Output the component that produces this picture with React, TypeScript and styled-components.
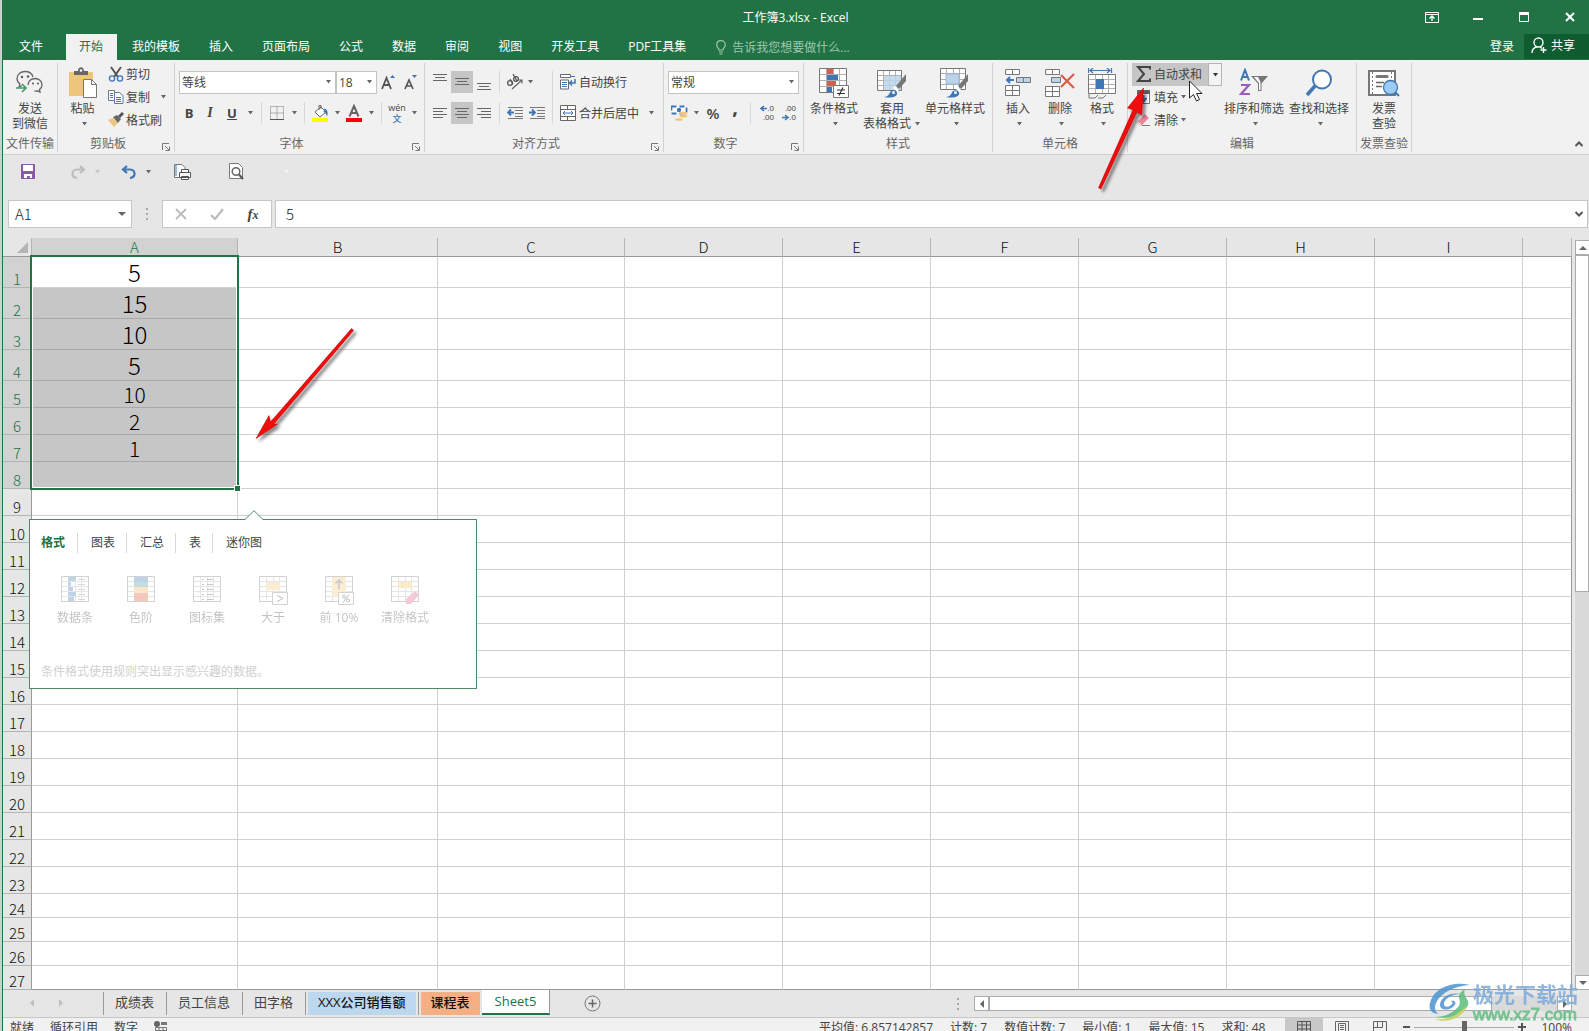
import React from "react";
import styled, { createGlobalStyle, css } from "styled-components";

const GREEN = "#217346";
const INK = "#444444";
const BLUE = "#3f76b5";

const GlobalStyle = createGlobalStyle`
  *, *::before, *::after { box-sizing: border-box; }
  html, body { margin: 0; padding: 0; overflow: hidden; }
  body, button, input, select {
    font-family: "Open Sans", "Noto Sans CJK SC", sans-serif;
    font-size: 12px;
    color: ${INK};
  }
  button { background: none; border: 0; padding: 0; margin: 0; cursor: default; }
  input, select { margin: 0; border: 0; outline: 0; border-radius: 0; }
`;

const Window = styled.div`
  position: relative;
  display: flex;
  flex-direction: column;
  min-height: 100vh;
  padding-left: 3px;
  background: linear-gradient(to right, #c9d2cd 2px, ${GREEN} 2px, ${GREEN} 3px, #e6e6e6 3px);
`;

/* ---------- title bar and tabs ---------- */
const TitleBar = styled.header`
  display: grid;
  grid-template-columns: 1fr auto 1fr;
  align-items: center;
  height: 34px;
  margin-left: -1px;
  background: ${GREEN};
  color: #fff;
`;
const Title = styled.h1`
  grid-column: 2;
  margin: 0;
  font-size: 12px;
  font-weight: 400;
`;
const WindowButtons = styled.div`
  display: flex;
  justify-content: flex-end;
`;
const WindowButton = styled.button`
  display: grid;
  place-items: center;
  width: 46px;
  height: 34px;
  &:last-child { width: 42px; padding-left: 4px; }
`;
const TabBar = styled.nav`
  display: flex;
  align-items: stretch;
  height: 26px;
  margin-left: -1px;
  padding-left: 3px;
  background: ${GREEN};
`;
const RibbonTab = styled.button<{ $active?: boolean }>`
  padding: 0 14px 0 ${(p) => (p.$active ? 13 : 14)}px;
  margin-right: 1px;
  line-height: 22px;
  color: ${(p) => (p.$active ? GREEN : "#fff")};
  background: ${(p) => (p.$active ? "#f1f1f1" : "transparent")};
`;
const TellMe = styled.label`
  display: flex;
  flex: 1;
  align-items: center;
  gap: 6px;
  padding-left: 15px;
`;
const TellMeInput = styled.input`
  width: 160px;
  padding: 0;
  background: transparent;
  &::placeholder { color: #9cc7ad; opacity: 1; }
`;
const SignIn = styled.button`
  padding: 0 10px;
  line-height: 22px;
  color: #fff;
`;
const Share = styled.button`
  display: flex;
  align-items: center;
  gap: 4px;
  width: 65px;
  height: 25px;
  padding: 0 0 2px 7px;
  line-height: 20px;
  color: #fff;
  background: #0f5c30;
`;

/* ---------- ribbon ---------- */
const Ribbon = styled.section`
  display: flex;
  padding: 3px 0 2px;
  background: #f1f1f1;
  border-bottom: 1px solid #d0d0d0;
`;
const GroupBox = styled.div<{ $w: number }>`
  display: flex;
  flex-direction: column;
  flex: none;
  width: ${(p) => p.$w}px;
  border-right: 1px solid #d2d2d2;
`;
const GroupBody = styled.div<{ $pad?: number }>`
  display: flex;
  height: 72px;
  padding-left: ${(p) => p.$pad ?? 4}px;
`;
const GroupFoot = styled.div`
  display: flex;
  height: 17px;
  line-height: 17px;
  color: #666;
  text-align: center;
  white-space: nowrap;
`;
const GroupName = styled.span`
  flex: 1;
`;
const Launcher = styled.button`
  display: grid;
  place-items: end center;
  width: 16px;
  height: 16px;
`;
const RibbonEnd = styled.div`
  display: flex;
  flex: 1;
  align-items: flex-end;
  justify-content: flex-end;
  padding: 0 5px 0 0;
`;
const BigButton = styled.button<{ $w: number }>`
  display: flex;
  flex-direction: column;
  align-items: center;
  flex: none;
  width: ${(p) => p.$w}px;
  height: 72px;
  padding-top: 4px;
  white-space: nowrap;
`;
const BigLine = styled.span<{ $lone?: boolean }>`
  display: flex;
  align-items: center;
  gap: 3px;
  height: 15px;
  padding-left: ${(p) => (p.$lone ? 3 : 0)}px;
  line-height: 15px;
`;
const BigIcon = styled.span`
  display: grid;
  place-items: center;
  height: 32px;
  margin-bottom: 2px;
`;
const Stack = styled.div`
  display: flex;
  flex-direction: column;
`;
const SmallButton = styled.button<{ $hot?: boolean }>`
  display: flex;
  align-items: center;
  gap: 2px;
  height: 23px;
  padding: 0 ${(p) => (p.$hot ? 6 : 4)}px 2px 4px;
  white-space: nowrap;
  background: ${(p) => (p.$hot ? "#c6c6c6" : "transparent")};
`;
const SmallCaret = styled.span<{ $gap: number }>`
  display: flex;
  padding-left: ${(p) => p.$gap}px;
`;
const SplitRow = styled.div`
  display: flex;
  width: 90px;
`;
const SplitDrop = styled.button`
  display: grid;
  place-items: center;
  width: 14px;
  height: 23px;
  background: #f4f4f4;
  border: 1px solid #b5b5b5;
`;
const Rows = styled.div`
  display: flex;
  flex-direction: column;
  gap: 9px;
  padding-top: 8px;
`;
const Row = styled.div`
  display: flex;
  align-items: center;
  height: 22px;
`;
const Tool = styled.button<{ $w?: number; $on?: boolean }>`
  display: grid;
  place-items: center;
  flex: none;
  width: ${(p) => p.$w ?? 22}px;
  height: 22px;
  background: ${(p) => (p.$on ? "#c6c6c6" : "transparent")};
`;
const ToolText = styled.span<{ $kind: "b" | "i" | "u" | "pct" | "comma" }>`
  font-size: 13px;
  line-height: 18px;
  font-weight: 700;
  ${(p) => p.$kind === "i" && css`font-family: "Liberation Serif", serif; font-style: italic; font-size: 14px;`}
  ${(p) => p.$kind === "u" && css`text-decoration: underline;`}
  ${(p) => p.$kind === "pct" && css`font-size: 15px; font-weight: 600;`}
  ${(p) => p.$kind === "comma" && css`font-size: 20px; line-height: 8px; padding-bottom: 13px;`}
`;
const Divider = styled.span<{ $tall?: boolean }>`
  flex: none;
  width: 1px;
  height: ${(p) => (p.$tall ? "53px" : "22px")};
  margin: ${(p) => (p.$tall ? "8px 4px 0" : "0 4px")};
  background: #d8d8d8;
`;
const Combo = styled.label<{ $w: number }>`
  display: flex;
  align-items: center;
  width: ${(p) => p.$w}px;
  height: 23px;
  padding: 0 3px 0 2px;
  background: #fff;
  border: 1px solid #c3c3c3;
`;
const Select = styled.select`
  flex: 1;
  min-width: 0;
  padding: 0;
  appearance: none;
  background: transparent;
`;
const WideTool = styled.button`
  display: flex;
  align-items: center;
  gap: 3px;
  height: 22px;
  padding: 0 3px;
  white-space: nowrap;
`;

/* ---------- quick access and formula bar ---------- */
const QuickBar = styled.div`
  display: flex;
  align-items: center;
  height: 45px;
  padding: 0 0 12px 12px;
`;
const QuickButton = styled.button<{ $w: number }>`
  display: grid;
  place-items: center;
  width: ${(p) => p.$w}px;
  height: 24px;
`;
const Spacer = styled.span<{ $w: number }>`
  flex: none;
  width: ${(p) => p.$w}px;
`;
const FormulaBar = styled.div`
  display: flex;
  align-items: center;
  height: 28px;
  margin: 0 1px 10px 5px;
`;
const Field = styled.div<{ $w?: number }>`
  display: flex;
  align-items: center;
  flex: ${(p) => (p.$w ? "none" : 1)};
  width: ${(p) => (p.$w ? `${p.$w}px` : "auto")};
  height: 28px;
  background: #fff;
  border: 1px solid #c6c6c6;
`;
const FieldInput = styled.input<{ $pad: number }>`
  flex: 1;
  min-width: 0;
  height: 26px;
  padding: 0 0 2px ${(p) => p.$pad}px;
  font-family: "Noto Sans CJK SC", sans-serif;
  font-size: 15px;
  font-weight: 300;
  color: #222;
  background: transparent;
`;
const FieldButton = styled.button<{ $w: number }>`
  display: grid;
  place-items: center;
  width: ${(p) => p.$w}px;
  height: 26px;
`;
const Grip = styled.span<{ $w: number }>`
  display: grid;
  place-items: center;
  flex: none;
  width: ${(p) => p.$w}px;
`;
const Fx = styled.span`
  font-family: "Liberation Serif", serif;
  font-size: 15px;
  font-style: italic;
  font-weight: 700;
  line-height: 18px;
  & > small { font-size: 12px; }
`;

/* ---------- sheet ---------- */
const SheetArea = styled.main`
  position: relative;
  display: flex;
`;
const Table = styled.table`
  flex: 1;
  width: 0;
  table-layout: fixed;
  border-collapse: separate;
  border-spacing: 0;
  font-family: "Noto Sans CJK SC", sans-serif;
  font-weight: 300;
  color: #000;
`;
const ColHead = styled.th<{ $sel?: boolean }>`
  height: 19px;
  padding: 0;
  font-size: 15px;
  font-weight: 300;
  line-height: 18px;
  color: ${(p) => (p.$sel ? GREEN : "#111")};
  background: ${(p) => (p.$sel ? "#d2d2d2" : "#e6e6e6")};
  border-right: 1px solid #b4b4b4;
  border-bottom: 1px solid #999;
`;
const Corner = styled.td`
  padding: 0 3px 3px 0;
  text-align: right;
  vertical-align: bottom;
  line-height: 0;
  background: #e6e6e6;
  border-right: 1px solid #b4b4b4;
  border-bottom: 1px solid #999;
`;
const RowHead = styled.th<{ $sel?: boolean; $h: number }>`
  height: ${(p) => p.$h}px;
  padding: 0;
  font-size: 15px;
  font-weight: 300;
  line-height: 16px;
  vertical-align: bottom;
  color: ${(p) => (p.$sel ? GREEN : "#111")};
  background: ${(p) => (p.$sel ? "#d2d2d2" : "#e6e6e6")};
  border-right: 1px solid #999;
  border-bottom: 1px solid #b4b4b4;
`;
const Cell = styled.td<{ $fill?: boolean; $size?: number }>`
  padding: 0;
  font-size: ${(p) => p.$size ?? 20}px;
  line-height: 24px;
  text-align: center;
  background: ${(p) => (p.$fill ? "#c6c6c6" : "#fff")};
  border-right: 1px solid #d0d0d0;
  border-bottom: 1px solid ${(p) => (p.$fill ? "#a8a8a8" : "#d0d0d0")};
  &:last-child { border-right-color: #999; }
  tr:last-child > & { border-bottom-color: #999; }
`;
const Selection = styled.div`
  position: absolute;
  left: 27px;
  top: 17px;
  width: 209px;
  height: 235px;
  border: 2px solid ${GREEN};
  box-shadow: inset 0 0 0 1px #fff;
  pointer-events: none;
  &::after {
    content: "";
    position: absolute;
    right: -4px;
    bottom: -4px;
    width: 7px;
    height: 7px;
    background: ${GREEN};
    border: 1px solid #fff;
  }
`;
const VScroll = styled.div`
  display: flex;
  flex-direction: column;
  flex: none;
  width: 17px;
  padding: 2px 0 0 3px;
`;
const ScrollButton = styled.button`
  display: grid;
  place-items: center;
  flex: none;
  width: 15px;
  height: 15px;
  background: #fff;
  border: 1px solid #ababab;
`;
const ScrollThumb = styled.span<{ $grow: number }>`
  flex: ${(p) => p.$grow};
  background: #fff;
  border: 1px solid #ababab;
`;
const ScrollTrack = styled.span<{ $grow: number }>`
  flex: ${(p) => p.$grow};
  background: #dadada;
`;

/* ---------- quick analysis popup ---------- */
const Popup = styled.aside`
  position: absolute;
  left: 26px;
  top: 281px;
  width: 448px;
  height: 170px;
  padding: 13px 11px 0;
  background: #fff;
  border: 1px solid #4d8a69;
`;
const PopupTip = styled.svg`
  position: absolute;
  left: 214px;
  top: -10px;
`;
const PopupTabs = styled.div`
  display: flex;
`;
const PopupTab = styled.button<{ $on?: boolean }>`
  padding: 0 11px 0 13px;
  line-height: 20px;
  border-right: 1px solid #d8d8d8;
  color: ${(p) => (p.$on ? GREEN : INK)};
  font-weight: ${(p) => (p.$on ? 700 : 400)};
  &:first-child { padding: 0 12px 0 0; }
  &:last-child { border: 0; }
`;
const PopupItems = styled.div`
  display: flex;
  margin: 22px 0 0 1px;
  opacity: 0.32;
`;
const PopupItem = styled.button`
  display: flex;
  flex-direction: column;
  align-items: center;
  gap: 4px;
  width: 66px;
  line-height: 18px;
  white-space: nowrap;
`;
const PopupHint = styled.p`
  margin: 35px 0 0;
  line-height: 20px;
  color: #d0d0d0;
`;

/* ---------- sheet tabs and status ---------- */
const SheetBar = styled.footer`
  display: flex;
  height: 28px;
  padding-right: 17px;
  border-bottom: 1px solid #c6c6c6;
`;
const SheetTabs = styled.div`
  display: flex;
  flex: 1;
  align-items: flex-start;
`;
const SheetNav = styled.button`
  display: grid;
  place-items: center;
  width: 29px;
  height: 26px;
`;
const SheetTab = styled.button<{ $tone?: string; $on?: boolean }>`
  flex: none;
  height: 23px;
  margin-top: 2px;
  padding: 0 12px 4px 11px;
  font-size: 13px;
  line-height: 18px;
  white-space: nowrap;
  border-left: 1px solid #999;
  ${(p) =>
    p.$tone &&
    css`
      color: #111;
      padding: 0 10px 4px;
      background: ${p.$tone};
      border-left: 2px solid #e6e6e6;
      border-right: 2px solid #e6e6e6;
      box-shadow: -1px 0 0 #999;
      margin-left: 1px;
      font-weight: 500;
    `}
  ${(p) =>
    p.$on &&
    css`
      height: 25px;
      margin-top: 0;
      padding: 0 13px 2px;
      line-height: 20px;
      color: ${GREEN};
      background: #fff;
      border-left: 0;
      border-right: 1px solid #999;
      border-bottom: 2px solid ${GREEN};
    `}
`;
const AddSheet = styled.button`
  display: grid;
  place-items: center;
  width: 18px;
  height: 26px;
  margin-left: 33px;
`;
const HScroll = styled.div`
  display: flex;
  flex: 0 1 598px;
  height: 15px;
  margin-top: 6px;
`;
const StatusBar = styled.div`
  display: flex;
  align-items: center;
  height: 22px;
  padding: 0 17px 4px 7px;
  white-space: nowrap;
  background: #f1f1f1;
`;
const StatusGroup = styled.div<{ $gap: number; $grow?: boolean }>`
  display: flex;
  align-items: center;
  flex: ${(p) => (p.$grow ? 1 : "none")};
  gap: ${(p) => p.$gap}px;
`;
const ViewButton = styled.button<{ $on?: boolean }>`
  display: grid;
  place-items: center;
  width: 38px;
  height: 18px;
  background: ${(p) => (p.$on ? "#c8c8c8" : "transparent")};
`;
const ZoomSlider = styled.input`
  width: 100px;
  height: 14px;
  appearance: none;
  background: linear-gradient(#aaa, #aaa) center / 100% 1px no-repeat;
  &::-webkit-slider-thumb {
    appearance: none;
    width: 5px;
    height: 12px;
    background: #666;
  }
`;

/* ---------- overlays ---------- */
const Notes = styled.svg`
  position: absolute;
  left: 0;
  top: 0;
  pointer-events: none;
`;
const Watermark = styled.div`
  position: absolute;
  right: 11px;
  bottom: 16px;
  display: flex;
  align-items: center;
  gap: 2px;
  opacity: 0.85;
  pointer-events: none;
`;
const MarkName = styled.div`
  font-family: "Noto Sans CJK SC", sans-serif;
  font-size: 21px;
  font-weight: 700;
  line-height: 23px;
  color: #7eabd8;
`;
const MarkUrl = styled.div`
  font-family: "Liberation Sans", sans-serif;
  font-size: 17px;
  font-weight: 400;
  line-height: 19px;
  color: #3fae68;
  -webkit-text-stroke: 1px #6cc08b;
`;

/* ---------- icons ---------- */
type IcoProps = { w: number; h?: number; children: React.ReactNode };
const Ico = ({ w, h = w, children }: IcoProps) => (
  <svg width={w} height={h} viewBox={`0 0 ${w} ${h}`} fill="none" aria-hidden="true">
    {children}
  </svg>
);
const Caret = ({ c = "#666" }: { c?: string }) => (
  <Ico w={7} h={4}><path d="M1 0h5L3.500 3.500z" fill={c} /></Ico>
);
const Tri = ({ d, c = "#666" }: { d: "up" | "down" | "left" | "right"; c?: string }) => {
  const path = { up: "M0 6l4-4 4 4z", down: "M0 2l4 4 4-4z", left: "M6 0L2 4l4 4z", right: "M2 0l4 4-4 4z" }[d];
  return <Ico w={8}><path d={path} fill={c} /></Ico>;
};
const Chevron = ({ up }: { up?: boolean }) => (
  <Ico w={10} h={8}><path d={up ? "M1.500 6L5 2.500 8.500 6" : "M1.500 2L5 5.500 8.500 2"} stroke="#555" strokeWidth="2" /></Ico>
);
const LauncherIcon = () => (
  <Ico w={8}>
    <path d="M.5 7V.5H7" stroke="#777" /><path d="M3 3l4 4M7.500 3.500v4h-4" stroke="#777" />
  </Ico>
);
const Dots = () => (
  <Ico w={3} h={12}><path d="M0 0h2v2H0zM0 5h2v2H0zM0 10h2v2H0z" fill="#a8a8a8" /></Ico>
);

const WeChat = () => (
  <Ico w={28} h={26}>
    <path d="M17 7C16 3.500 12.500 1.500 9 1.500 4.500 1.500 1 4.500 1 8.500c0 2.200 1 4 2.800 5.300L3 17l3-1.500" stroke="#666" strokeWidth="1.300" />
    <path d="M12 15c0-4 3.200-6.500 7-6.500s7 2.700 7 6.200c0 2-1 3.700-2.500 4.800l.5 2.500-2.500-1.200c-1 .3-2 .4-3 .2" stroke="#666" strokeWidth="1.300" />
    <circle cx="6" cy="7" r="1.200" fill="#555" /><circle cx="12" cy="6.500" r="1.200" fill="#555" />
    <circle cx="17" cy="13.500" r="1" fill="#555" /><circle cx="22" cy="13.500" r="1" fill="#555" />
    <path d="M0 18h9M6 14l4 4-4 4" stroke="#3f9a63" strokeWidth="1.600" />
  </Ico>
);
const Paste = () => (
  <Ico w={29} h={32}>
    <path d="M1 5h24v8H16v16H1z" fill="#eec57c" />
    <path d="M6 4h4c0-5 6-5 6 0h4v4H6z" fill="#666" /><circle cx="13" cy="3.500" r="1.200" fill="#fff" />
    <path d="M15.500 12.500h8l5 5v13h-13z" fill="#fff" stroke="#777" />
    <path d="M23.500 12.500v5h5" stroke="#777" />
  </Ico>
);
const Scissors = () => (
  <Ico w={16}>
    <path d="M3 1l7 10M13 1L6 11" stroke="#555" strokeWidth="2" />
    <circle cx="4" cy="12.500" r="2.600" stroke={BLUE} strokeWidth="1.400" />
    <circle cx="12" cy="12.500" r="2.600" stroke={BLUE} strokeWidth="1.400" />
  </Ico>
);
const Copy = () => (
  <Ico w={16}>
    <path d="M.5 1.500h6v10h-6z" fill="#fff" stroke="#777" /><path d="M2 4.500h3M2 6.500h3M2 8.500h3" stroke={BLUE} />
    <path d="M6.500 3.500h5l3.500 3v8H6.500z" fill="#fff" stroke="#5a7ba3" />
    <path d="M8 8.500h5M8 10.500h5M8 12.500h5" stroke={BLUE} />
  </Ico>
);
const Painter = () => (
  <Ico w={16}>
    <path d="M0 8l5-2 5 5-4 4z" fill="#eec57c" /><path d="M5 5l4-2 4 4-3 4z" fill="#666" />
    <path d="M11 5l4-4" stroke="#555" strokeWidth="3" />
  </Ico>
);
const GrowFont = ({ up }: { up?: boolean }) => (
  <Ico w={16}>
    {up ? (
      <><path d="M1 15L5.500 4 10 15M3 11h5" stroke="#555" strokeWidth="1.800" /><path d="M9 4l2.500-3L14 4z" fill={BLUE} /></>
    ) : (
      <><path d="M2 15L6 6l4 9M3.500 12h5" stroke="#555" strokeWidth="1.700" /><path d="M9 1h5l-2.500 3z" fill={BLUE} /></>
    )}
  </Ico>
);
const Borders = () => (
  <Ico w={14}>
    <path d="M.5.5h13v13H.5zM7 .5v13M.5 7h13" stroke="#777" strokeDasharray="1 1" /><path d="M0 13.500h14" stroke="#555" />
  </Ico>
);
const Bucket = () => (
  <Ico w={17} h={18}>
    <path d="M3 8l6-5 5 5-6 5z" fill="#fff" stroke="#666" /><path d="M7 6V1.500h2V5" stroke="#666" />
    <path d="M12.500 4.500c3 1 4 4 2.500 8-1-3-2-4-3.500-4.500z" fill={BLUE} /><path d="M0 14h16v4H0z" fill="#ff0" />
  </Ico>
);
const FontColor = () => (
  <Ico w={16} h={18}>
    <path d="M3.500 12.500L8 2l4.500 10.500M5 9h6" stroke="#666" strokeWidth="2" /><path d="M0 14h16v4H0z" fill="#f00" />
  </Ico>
);
const Pinyin = styled.span`
  display: flex;
  flex-direction: column;
  align-items: center;
  font-size: 9px;
  line-height: 11px;
  & > b { font-family: "Noto Sans CJK SC", sans-serif; font-weight: 500; color: ${BLUE}; line-height: 11px; height: 11px; }
  & > span { height: 11px; }
`;
const Lines = ({ rows, y = 0 }: { rows: [number, number][]; y?: number }) => (
  <Ico w={14} h={18}>
    {rows.map(([x, w], i) => <path key={i} d={`M${x} ${y + i * 3 + 0.5}h${w}`} stroke="#666" />)}
  </Ico>
);
const Orient = () => (
  <Ico w={18}>
    <circle cx="4" cy="10" r="2.400" stroke="#555" strokeWidth="1.300" /><path d="M4 6l3 5" stroke="#555" strokeWidth="1.300" />
    <circle cx="10" cy="6" r="2.400" stroke="#555" strokeWidth="1.300" /><path d="M7 1l4 7" stroke="#555" strokeWidth="1.300" />
    <path d="M6 16L16 7M12.500 7H16v3.500" stroke="#666" strokeWidth="1.200" />
  </Ico>
);
const Indent = ({ right }: { right?: boolean }) => (
  <Ico w={17} h={14}>
    <path d="M1 1.500h15M8 4.500h8M8 7.500h8M1 12.500h15M8 10.500h8" stroke="#777" />
    <path d={right ? "M0 6.500h5M3 3.500l3 3-3 3" : "M7 6.500H2M4 3.500l-3 3 3 3"} stroke={BLUE} strokeWidth="1.800" />
  </Ico>
);
const Wrap = () => (
  <Ico w={16}>
    <path d="M.5.5h10v3H.5zM.5 6h8v9h-8z" fill="#fff" stroke="#667" /><path d="M2 8.500h5M2 10.500h5M2 12.500h5M10 2.500h5" stroke={BLUE} />
    <path d="M15 5v4h-5M12 6.500L9.500 9l2.500 2.500" stroke={BLUE} strokeWidth="1.500" />
  </Ico>
);
const Merge = () => (
  <Ico w={16}>
    <path d="M.5.5h15v15H.5zM.5 4.500h15M.5 11.500h15M7.500.5v4M7.500 11.500v4" fill="#fff" stroke="#666" />
    <path d="M3 8h10M5 6L3 8l2 2M11 6l2 2-2 2" stroke={BLUE} />
  </Ico>
);
const Money = () => (
  <Ico w={17}>
    <path d="M.5 1.500h15v7H.5z" fill="#fff" stroke={BLUE} strokeWidth="1.800" strokeDasharray="5 3" /><circle cx="8" cy="5" r="2.200" fill={BLUE} />
    <ellipse cx="12.500" cy="8" rx="4" ry="1.600" fill="#eec57c" /><ellipse cx="12.500" cy="11" rx="4" ry="1.600" fill="#eec57c" />
    <ellipse cx="8" cy="14.500" rx="4" ry="1.600" fill="#eec57c" stroke="#f1f1f1" strokeWidth=".5" />
  </Ico>
);
const DecBox = styled.span`
  display: flex;
  flex-direction: column;
  width: 16px;
  font-family: "Liberation Sans", sans-serif;
  font-size: 8px;
  line-height: 9px;
  text-align: right;
`;
const DecTop = styled.span`
  display: flex;
  align-items: center;
  justify-content: flex-end;
`;
const DecArrow = ({ right }: { right?: boolean }) => (
  <Ico w={7} h={7}><path d={right ? "M0 3.500h5M3 1l3 2.500L3 6" : "M7 3.500H2M4 1L1 3.500 4 6"} stroke={BLUE} strokeWidth="1.500" /></Ico>
);
const Grid = ({ cols = 4, rows = 4, w = 27, h = 24 }: { cols?: number; rows?: number; w?: number; h?: number }) => (
  <>
    <path d={`M.5.5h${w}v${h}H.5z`} fill="#fff" stroke="#777" />
    {Array.from({ length: cols - 1 }, (_, i) => <path key={`c${i}`} d={`M${Math.round(((i + 1) * w) / cols) + 0.5} 1v${h - 1}`} stroke="#b0b0b0" />)}
    {Array.from({ length: rows - 1 }, (_, i) => <path key={`r${i}`} d={`M1 ${Math.round(((i + 1) * h) / rows) + 0.5}h${w - 1}`} stroke="#b0b0b0" />)}
  </>
);
const CondFormat = () => (
  <Ico w={31} h={31}>
    <Grid />
    <path d="M8 1h6v5H8zM8 13h9v5H8z" fill="#d0614f" /><path d="M8 7h11v5H8zM8 19h5v5H8z" fill={BLUE} />
    <path d="M14.500 17.500h15v12h-15z" fill="#fff" stroke="#777" />
    <path d="M18 22h8M18 25.500h8M24 19.500l-4 8" stroke="#333" strokeWidth="1.200" />
  </Ico>
);
const Brush = () => (
  <>
    <path d="M28 6v7l-7 8-3-3z" fill="#777" /><path d="M17 18l4 4-2 2-4-4z" fill="#fff" />
    <path d="M6 29c4 0 5-3 7-6 3-2 7 0 6 3-1 4-9 4-13 3z" fill={BLUE} /><circle cx="15.500" cy="24.500" r="1.500" fill="#fff" />
  </>
);
const TableFormat = () => (
  <Ico w={30} h={31}>
    <g transform="translate(0 2)"><Grid w={24} h={20} /><path d="M7 6h17v14H7z" fill="#bcd4ea" opacity=".85" /></g>
    <g transform="translate(1 0)"><Brush /></g>
  </Ico>
);
const CellStyle = () => (
  <Ico w={30} h={31}>
    <Grid w={25} h={21} /><path d="M6 6h13v10H6z" fill="#bcd4ea" stroke="#9ab7d2" /><Brush />
  </Ico>
);
const InsertCells = () => (
  <Ico w={27} h={28}>
    <path d="M.5.5h14v5H.5zM7.500.5v5M.5 16.500h14v10H.5zM7.500 16.500v10M.5 21.500h14" fill="#fff" stroke="#777" />
    <path d="M11.500 8.500h14v5h-14z" fill="#bcd4ea" stroke="#777" /><path d="M18.500 8.500v5" stroke="#777" />
    <path d="M9 11H2M5 8l-3 3 3 3" stroke={BLUE} strokeWidth="2" />
  </Ico>
);
const DeleteCells = () => (
  <Ico w={30} h={28}>
    <path d="M.5.5h14v5H.5zM7.500.5v5M.5 17.500h14v10H.5zM7.500 17.500v10M.5 22.500h14" fill="#fff" stroke="#777" />
    <path d="M6.500 8.500h9v5h-9z" fill="#bcd4ea" stroke="#777" />
    <path d="M16 6l13 13M29 5L16 18" stroke="#dc5a48" strokeWidth="2.200" />
  </Ico>
);
const FormatCells = () => (
  <Ico w={28} h={31}>
    <path d="M.5 0v5M23.500 0v5M2 2.500h20M5 0L2 2.500 5 5M19 0l3 2.500L19 5" stroke={BLUE} strokeWidth="1.200" />
    <g transform="translate(0 6)"><Grid w={27} h={19} /><path d="M8 5h8v10H8z" fill={BLUE} /></g>
    <path d="M1 26v4h6l3-3M10 30h5l3-3" stroke="#777" />
  </Ico>
);
const Sigma = () => (
  <Ico w={16}><path d="M14 3.500V1H2l6 7-6 7h12v-2.500" stroke="#444" strokeWidth="2" /></Ico>
);
const FillDown = () => (
  <Ico w={16}>
    <path d="M1.500 1.500h12v13h-12z" fill="#fff" stroke="#777" /><path d="M1 1h13v4H1z" fill="#666" />
    <path d="M7.500 6v6M4.500 9l3 3.500 3-3.500" stroke={BLUE} strokeWidth="2" />
  </Ico>
);
const Eraser = () => (
  <Ico w={16}><path d="M2 9l7-7 4 4-7 7H4z" fill="#e8899b" /><path d="M2 9l4 4H4L1 10.500z" fill="#fff" stroke="#d77" strokeWidth=".5" /><path d="M6 13.500h8" stroke="#777" /></Ico>
);
const SortIcon = () => (
  <Ico w={30} h={30}>
    <path d="M2 12.500L6 2l4 10.500M3.500 9h5" stroke={BLUE} strokeWidth="2" />
    <path d="M2 17h8L2 26h9" stroke="#9a5fb8" strokeWidth="2.200" />
    <path d="M12 8h17l-6.500 7.500V23H19v-7.500z" fill="#777" /><path d="M15 9h4l2.500 5v8h-1.500v-7z" fill="#fff" />
  </Ico>
);
const FindIcon = () => (
  <Ico w={28} h={28}>
    <circle cx="17" cy="10.500" r="9" fill="#fff" stroke={BLUE} strokeWidth="2" /><path d="M10 17L2 26" stroke={BLUE} strokeWidth="3.500" />
  </Ico>
);
const Invoice = () => (
  <Ico w={32} h={28}>
    <path d="M1 2h26v24H1z" fill="#fff" stroke="#777" strokeWidth="2" /><path d="M4.500 3v22M23.500 3v12" stroke="#777" strokeDasharray="2 2" />
    <path d="M9 7.500h10" stroke="#777" strokeWidth="3" strokeLinecap="round" /><path d="M8 13.500h8M8 17.500h6" stroke="#666" strokeWidth="1.500" />
    <path d="M27 23l4 4" stroke={BLUE} strokeWidth="2" /><circle cx="22.500" cy="18.500" r="7" fill="#9ccbf5" stroke={BLUE} strokeWidth="1.300" />
  </Ico>
);
const Save = () => (
  <Ico w={14} h={15}><path d="M0 0h14v15H0z" fill="#8a5ba6" /><path d="M2 1h10v6H2zM3 10h8v4H3z" fill="#fff" /><path d="M6 12h3v2H6z" fill="#8a5ba6" /></Ico>
);
const Undo = ({ flip, c }: { flip?: boolean; c: string }) => (
  <Ico w={16} h={14}>
    <g transform={flip ? "translate(16 0) scale(-1 1)" : undefined}>
      <path d="M6 1L2 4.500 6 8M2 4.500h7c6 0 6 8 0 8.500" stroke={c} strokeWidth="2.200" />
    </g>
  </Ico>
);
const PrintIcon = () => (
  <Ico w={17} h={16}>
    <path d="M6 13.500H.5V.5H8l3 3V6" fill="#fff" stroke="#777" /><path d="M2 1v11" stroke={BLUE} />
    <path d="M5.500 8.500h11v5h-11zM7.500 5.500h7v3h-7zM7.500 12.500h7v3h-7z" fill="#fff" stroke="#555" />
  </Ico>
);
const Preview = () => (
  <Ico w={15} h={17}>
    <path d="M.5.5h9l4 4v11H.5z" fill="#fff" stroke="#777" /><circle cx="7" cy="8.500" r="3.800" fill="#fff" stroke="#666" strokeWidth="1.500" /><path d="M10 11.500l4 4.500" stroke="#555" strokeWidth="2" />
  </Ico>
);

const PopIcon = ({ kind }: { kind: number }) => (
  <Ico w={30} h={30}>
    <g transform="translate(1 1)"><Grid w={27} h={25} rows={5} /></g>
    <g transform="translate(1 0)">
      {kind === 0 && <path d="M7 2h8v4H7zM7 7h3v4H7zM7 12h5v4H7zM7 17h8v4H7zM7 22h6v4H7z" fill={BLUE} />}
      {kind === 0 && <path d="M17 4.500h7M17 9.500h7M17 14.500h7M17 19.500h7M17 24.500h7" stroke="#888" />}
      {kind === 1 && <><path d="M7 2h14v5H7z" fill={BLUE} /><path d="M7 7h14v5H7z" fill="#4a9a9a" /><path d="M7 12h14v6H7z" fill="#f0b860" /><path d="M7 18h14v8H7z" fill="#dc5a38" /></>}
      {kind === 2 && <path d="M9 4.500h2M14 4.500h6M9 9.500h2M14 9.500h6M9 14.500h2M14 14.500h6M9 19.500h2M14 19.500h6M9 24.500h2M14 24.500h6" stroke="#555" />}
      {kind === 3 && <path d="M7 7h14v8H7z" fill="#f0c878" />}
      {kind === 4 && <><path d="M7 2h14v20H7z" fill="#f0c878" /><path d="M14 14V5M10.500 8.500L14 5l3.500 3.500" stroke="#555" strokeWidth="1.500" /></>}
      {kind === 5 && <><path d="M7 7h14v6H7z" fill="#f0c850" /><path d="M15 24l9-8 4 4-8 9h-5z" fill="#e0607f" /></>}
      {(kind === 3 || kind === 4) && <path d="M13.500 17.500h15v12h-15z" fill="#fff" stroke="#777" />}
      {kind === 3 && <path d="M18 20.500l6 3-6 3" stroke="#333" />}
      {kind === 4 && <><path d="M24 19.500l-6 8" stroke="#333" /><circle cx="19" cy="21.500" r="1.500" stroke="#333" /><circle cx="23" cy="25.500" r="1.500" stroke="#333" /></>}
    </g>
  </Ico>
);

/* ---------- composed parts ---------- */
type GroupProps = { w: number; name: string; pad?: number; launcher?: boolean; children: React.ReactNode };
const Group = ({ w, name, pad, launcher, children }: GroupProps) => (
  <GroupBox $w={w}>
    <GroupBody $pad={pad}>{children}</GroupBody>
    <GroupFoot>
      <GroupName>{name}</GroupName>
      {launcher && <Launcher aria-label={`${name}设置`}><LauncherIcon /></Launcher>}
    </GroupFoot>
  </GroupBox>
);
type BigProps = { w: number; icon: React.ReactNode; text: string; second?: string; caret?: boolean };
const Big = ({ w, icon, text, second, caret }: BigProps) => (
  <BigButton $w={w}>
    <BigIcon>{icon}</BigIcon>
    <BigLine>{text}</BigLine>
    <BigLine $lone={!second}>{second}{caret && <Caret />}</BigLine>
  </BigButton>
);
type SmallProps = { icon: React.ReactNode; text: string; caretGap?: number; hot?: boolean };
const Small = ({ icon, text, caretGap, hot }: SmallProps) => (
  <SmallButton $hot={hot}>
    {icon}{text}{caretGap !== undefined && <SmallCaret $gap={caretGap}><Caret /></SmallCaret>}
  </SmallButton>
);
const Drop = ({ w = 12, label }: { w?: number; label: string }) => (
  <Tool $w={w} aria-label={label}><Caret /></Tool>
);

const columns: [string, number | null][] = [
  ["A", 206], ["B", 200], ["C", 187], ["D", 158], ["E", 148], ["F", 148], ["G", 148], ["H", 148], ["I", 148], ["", null],
];
const values = ["5", "15", "10", "5", "10", "2", "1", ""];
const rowHeight = (n: number) => (n <= 4 ? 31 : n <= 23 ? 27 : 24);
const ribbonTabs = ["开始", "我的模板", "插入", "页面布局", "公式", "数据", "审阅", "视图", "开发工具", "PDF工具集"];
const full: [number, number] = [0, 14];

export default function App() {
  return (
    <Window>
      <GlobalStyle />
      <TitleBar>
        <Title>工作簿3.xlsx - Excel</Title>
        <WindowButtons>
          <WindowButton aria-label="功能区显示选项">
            <Ico w={14} h={11}><path d="M.5.500h13v10H.5zM.5 2.500h13" stroke="#fff" /><path d="M7 9V4.500M4.500 6.500L7 4l2.500 2.500" stroke="#fff" strokeWidth="1.300" /></Ico>
          </WindowButton>
          <WindowButton aria-label="最小化"><Ico w={10}><path d="M0 7h10" stroke="#fff" strokeWidth="2" /></Ico></WindowButton>
          <WindowButton aria-label="最大化"><Ico w={10}><path d="M.5.500h9v9h-9z" stroke="#fff" /><path d="M0 1.500h10" stroke="#fff" strokeWidth="3" /></Ico></WindowButton>
          <WindowButton aria-label="关闭"><Ico w={10}><path d="M1 1l8 8M9 1L1 9" stroke="#fff" strokeWidth="2" /></Ico></WindowButton>
        </WindowButtons>
      </TitleBar>
      <TabBar>
        <RibbonTab>文件</RibbonTab>
        <Spacer $w={8} />
        {ribbonTabs.map((t, i) => <RibbonTab key={t} $active={i === 0}>{t}</RibbonTab>)}
        <TellMe>
          <Ico w={10} h={15}><path d="M3 10c0-2-2.300-2.500-2.300-5.200C.7 2.500 2.500.7 5 .7s4.300 1.800 4.300 4.100C9.300 7.500 7 8 7 10zM3 12h4M3.500 14h3" stroke="#9cc7ad" strokeWidth="1.200" /></Ico>
          <TellMeInput aria-label="操作说明搜索" placeholder="告诉我您想要做什么..." />
        </TellMe>
        <SignIn>登录</SignIn>
        <Share>
          <Ico w={16} h={17}><circle cx="7.500" cy="5.500" r="4.500" stroke="#fff" strokeWidth="1.400" /><path d="M1 16c0-3 2-5.500 5-6M9 10l2 1.500M12.500 10v6M9.500 13h6" stroke="#fff" strokeWidth="1.400" /></Ico>
          共享
        </Share>
      </TabBar>

      <Ribbon>
        <Group w={55} name="文件传输" pad={0}>
          <Big w={54} icon={<WeChat />} text="发送" second="到微信" />
        </Group>
        <Group w={117} name="剪贴板" pad={3} launcher>
          <Big w={43} icon={<Paste />} text="粘贴" caret />
          <Stack>
            <Small icon={<Scissors />} text="剪切" />
            <Small icon={<Copy />} text="复制" caretGap={8} />
            <Small icon={<Painter />} text="格式刷" />
          </Stack>
        </Group>
        <Group w={250} name="字体" launcher>
          <Rows>
            <Row>
              <Combo $w={157}><Select aria-label="字体"><option>等线</option></Select><Caret /></Combo>
              <Combo $w={41}><Select aria-label="字号"><option>18</option></Select><Caret /></Combo>
              <Spacer $w={1} />
              <Tool aria-label="增大字号"><GrowFont up /></Tool>
              <Tool aria-label="减小字号"><GrowFont /></Tool>
            </Row>
            <Row>
              <Tool $w={20}><ToolText $kind="b">B</ToolText></Tool>
              <Tool><ToolText $kind="i">I</ToolText></Tool>
              <Tool><ToolText $kind="u">U</ToolText></Tool>
              <Drop w={14} label="下划线选项" />
              <Divider />
              <Tool aria-label="边框"><Borders /></Tool><Drop label="边框选项" />
              <Divider />
              <Tool aria-label="填充颜色"><Bucket /></Tool><Drop label="填充颜色选项" />
              <Tool aria-label="字体颜色"><FontColor /></Tool><Drop label="字体颜色选项" />
              <Divider />
              <Tool><Pinyin><span>wén</span><b>文</b></Pinyin></Tool><Drop label="拼音选项" />
            </Row>
          </Rows>
        </Group>
        <Group w={239} name="对齐方式" launcher>
          <Rows>
            <Row>
              <Tool aria-label="顶端对齐"><Lines rows={[full, [2, 10], full]} y={1} /></Tool>
              <Tool aria-label="垂直居中" $on><Lines rows={[full, [2, 10], full]} y={5} /></Tool>
              <Tool aria-label="底端对齐"><Lines rows={[full, [2, 10], full]} y={10} /></Tool>
              <Divider />
              <Tool aria-label="方向"><Orient /></Tool><Drop w={8} label="方向选项" />
            </Row>
            <Row>
              <Tool aria-label="左对齐"><Lines rows={[full, [0, 10], full, [0, 10]]} y={4} /></Tool>
              <Tool aria-label="居中" $on><Lines rows={[full, [2, 10], full, [2, 10]]} y={4} /></Tool>
              <Tool aria-label="右对齐"><Lines rows={[full, [4, 10], full, [4, 10]]} y={4} /></Tool>
              <Divider />
              <Tool aria-label="减少缩进量"><Indent /></Tool>
              <Tool aria-label="增加缩进量"><Indent right /></Tool>
            </Row>
          </Rows>
          <Divider $tall />
          <Rows>
            <Row><WideTool><Wrap />自动换行</WideTool></Row>
            <Row><WideTool><Merge />合并后居中</WideTool><Spacer $w={3} /><Drop label="合并选项" /></Row>
          </Rows>
        </Group>
        <Group w={140} name="数字" launcher>
          <Rows>
            <Row><Combo $w={131}><Select aria-label="数字格式"><option>常规</option></Select><Caret /></Combo></Row>
            <Row>
              <Tool aria-label="会计数字格式"><Money /></Tool><Drop label="会计格式选项" />
              <Tool><ToolText $kind="pct">%</ToolText></Tool>
              <Tool><ToolText $kind="comma">,</ToolText></Tool>
              <Divider />
              <Tool><DecBox><DecTop><DecArrow />.0</DecTop><span>.00</span></DecBox></Tool>
              <Tool><DecBox><span>.00</span><DecTop><DecArrow right />.0</DecTop></DecBox></Tool>
            </Row>
          </Rows>
        </Group>
        <Group w={189} name="样式" pad={0}>
          <Big w={60} icon={<CondFormat />} text="条件格式" caret />
          <Big w={56} icon={<TableFormat />} text="套用" second="表格格式" caret />
          <Big w={70} icon={<CellStyle />} text="单元格样式" caret />
        </Group>
        <Group w={135} name="单元格">
          <Big w={42} icon={<InsertCells />} text="插入" caret />
          <Big w={42} icon={<DeleteCells />} text="删除" caret />
          <Big w={42} icon={<FormatCells />} text="格式" caret />
        </Group>
        <Group w={229} name="编辑">
          <Stack>
            <SplitRow>
              <Small icon={<Sigma />} text="自动求和" hot />
              <SplitDrop aria-label="自动求和选项"><Caret c="#333" /></SplitDrop>
            </SplitRow>
            <Small icon={<FillDown />} text="填充" caretGap={0} />
            <Small icon={<Eraser />} text="清除" caretGap={0} />
          </Stack>
          <Big w={64} icon={<SortIcon />} text="排序和筛选" caret />
          <Big w={66} icon={<FindIcon />} text="查找和选择" caret />
        </Group>
        <Group w={55} name="发票查验" pad={0}>
          <Big w={54} icon={<Invoice />} text="发票" second="查验" />
        </Group>
        <RibbonEnd><button aria-label="折叠功能区"><Chevron up /></button></RibbonEnd>
      </Ribbon>

      <QuickBar>
        <QuickButton $w={26} aria-label="保存"><Save /></QuickButton>
        <Spacer $w={24} />
        <QuickButton $w={26} aria-label="恢复"><Undo flip c="#bdbdbd" /></QuickButton>
        <QuickButton $w={12} aria-label="恢复选项"><Caret c="#c4c4c4" /></QuickButton>
        <Spacer $w={13} />
        <QuickButton $w={26} aria-label="撤消"><Undo c={BLUE} /></QuickButton>
        <QuickButton $w={12} aria-label="撤消选项"><Caret /></QuickButton>
        <Spacer $w={13} />
        <QuickButton $w={30} aria-label="快速打印"><PrintIcon /></QuickButton>
        <Spacer $w={24} />
        <QuickButton $w={30} aria-label="打印预览"><Preview /></QuickButton>
        <Spacer $w={28} />
        <QuickButton $w={14} aria-label="自定义快速访问工具栏"><Caret c="#f4f4f4" /></QuickButton>
      </QuickBar>

      <FormulaBar>
        <Field $w={124}>
          <FieldInput $pad={6} aria-label="名称框" defaultValue="A1" />
          <FieldButton $w={18} aria-label="名称列表"><Tri d="down" /></FieldButton>
        </Field>
        <Grip $w={30}><Dots /></Grip>
        <Field $w={110}>
          <FieldButton $w={36} aria-label="取消"><Ico w={12}><path d="M1 1l10 10M11 1L1 11" stroke="#bbb" strokeWidth="1.800" /></Ico></FieldButton>
          <FieldButton $w={36} aria-label="输入"><Ico w={14} h={12}><path d="M1 7l4 4L13 1" stroke="#bbb" strokeWidth="2.200" /></Ico></FieldButton>
          <FieldButton $w={36} aria-label="插入函数"><Fx>f<small>x</small></Fx></FieldButton>
        </Field>
        <Spacer $w={3} />
        <Field>
          <FieldInput $pad={10} aria-label="编辑栏" defaultValue="5" />
          <FieldButton $w={16} aria-label="展开编辑栏"><Chevron /></FieldButton>
        </Field>
      </FormulaBar>

      <SheetArea>
        <Table>
          <colgroup>
            <col style={{ width: 29 }} />
            {columns.map(([n, w]) => <col key={n} style={w ? { width: w } : undefined} />)}
          </colgroup>
          <thead>
            <tr>
              <Corner><Ico w={11}><path d="M11 0v11H0z" fill="#b4b4b4" /></Ico></Corner>
              {columns.map(([n]) => <ColHead key={n} scope="col" $sel={n === "A"}>{n}</ColHead>)}
            </tr>
          </thead>
          <tbody>
            {Array.from({ length: 27 }, (_, i) => i + 1).map((r) => (
              <tr key={r}>
                <RowHead scope="row" $h={rowHeight(r)} $sel={r <= 8}>{r}</RowHead>
                {columns.map(([n]) => (
                  <Cell key={n} $fill={n === "A" && r > 1 && r <= 8} $size={r <= 4 ? 24 : 21}>
                    {n === "A" ? values[r - 1] : null}
                  </Cell>
                ))}
              </tr>
            ))}
          </tbody>
        </Table>
        <VScroll>
          <ScrollButton aria-label="向上滚动"><Tri d="up" /></ScrollButton>
          <ScrollThumb $grow={336} />
          <ScrollTrack $grow={385} />
          <ScrollButton aria-label="向下滚动"><Tri d="down" /></ScrollButton>
        </VScroll>
        <Selection />
        <Popup>
          <PopupTip width="20" height="11" viewBox="0 0 20 11">
            <path d="M0 10.500L10 .7l10 9.800z" fill="#fff" /><path d="M0 9.500h1L10 .7l9 8.800h1" fill="none" stroke="#4d8a69" />
          </PopupTip>
          <PopupTabs>
            {["格式", "图表", "汇总", "表", "迷你图"].map((t, i) => <PopupTab key={t} $on={i === 0}>{t}</PopupTab>)}
          </PopupTabs>
          <PopupItems>
            {["数据条", "色阶", "图标集", "大于", "前 10%", "清除格式"].map((t, i) => (
              <PopupItem key={t}><PopIcon kind={i} />{t}</PopupItem>
            ))}
          </PopupItems>
          <PopupHint>条件格式使用规则突出显示感兴趣的数据。</PopupHint>
        </Popup>
      </SheetArea>

      <SheetBar>
        <SheetTabs>
          <Spacer $w={14} />
          <SheetNav aria-label="上一个工作表"><Tri d="left" c="#c0c0c0" /></SheetNav>
          <SheetNav aria-label="下一个工作表"><Tri d="right" c="#c0c0c0" /></SheetNav>
          <Spacer $w={28} />
          <SheetTab>成绩表</SheetTab>
          <SheetTab>员工信息</SheetTab>
          <SheetTab>田字格</SheetTab>
          <SheetTab $tone="#bdd7ee">XXX公司销售额</SheetTab>
          <SheetTab $tone="#f4b084">课程表</SheetTab>
          <SheetTab $on>Sheet5</SheetTab>
          <AddSheet aria-label="新工作表">
            <Ico w={17}><circle cx="8.500" cy="8.500" r="7.500" stroke="#777" /><path d="M8.500 4.500v8M4.500 8.500h8" stroke="#666" strokeWidth="1.500" /></Ico>
          </AddSheet>
        </SheetTabs>
        <Grip $w={32}><Dots /></Grip>
        <HScroll>
          <ScrollButton aria-label="向左滚动"><Tri d="left" /></ScrollButton>
          <ScrollThumb $grow={503} />
          <ScrollTrack $grow={65} />
          <ScrollButton aria-label="向右滚动"><Tri d="right" /></ScrollButton>
        </HScroll>
      </SheetBar>

      <StatusBar>
        <StatusGroup $gap={16} $grow>
          <span>就绪</span><span>循环引用</span><span>数字</span>
          <Ico w={14} h={13}><circle cx="3" cy="3" r="3" fill="#666" /><path d="M7 1h6v3H7z" fill="#777" /><path d="M1.500 6.500h11v6h-11zM1 9.500h12M5 6v7M9 6v7" stroke="#777" /></Ico>
        </StatusGroup>
        <StatusGroup $gap={17}>
          <span>平均值: 6.857142857</span><span>计数: 7</span><span>数值计数: 7</span>
          <span>最小值: 1</span><span>最大值: 15</span><span>求和: 48</span>
        </StatusGroup>
        <Spacer $w={20} />
        <StatusGroup $gap={0}>
          <ViewButton $on aria-label="普通"><Ico w={14} h={12}><path d="M.5.5h13v11H.5zM.5 4h13M.5 8h13M5 .5v11M9.500.5v11" stroke="#555" /></Ico></ViewButton>
          <ViewButton aria-label="页面布局视图"><Ico w={14} h={12}><path d="M.5.5h13v11H.5zM3.500 2.500h7v8h-7zM5 4.500h4M5 6.500h4M5 8.500h4" stroke="#666" /></Ico></ViewButton>
          <ViewButton aria-label="分页预览"><Ico w={14} h={12}><path d="M.5 11.500V.5h13v11M4.500.5v6M9.500.5v6M.5 6.500h9" stroke="#666" /></Ico></ViewButton>
        </StatusGroup>
        <Spacer $w={4} />
        <StatusGroup $gap={4}>
          <button aria-label="缩小"><Ico w={7} h={10}><path d="M0 5h7" stroke="#555" strokeWidth="2" /></Ico></button>
          <ZoomSlider type="range" aria-label="缩放" min={0} max={100} defaultValue={50} />
          <button aria-label="放大"><Ico w={8} h={10}><path d="M0 5h8M4 1v8" stroke="#555" strokeWidth="2" /></Ico></button>
        </StatusGroup>
        <Spacer $w={15} />
        <span>100%</span>
      </StatusBar>

      <Watermark>
        <svg width="43" height="40" viewBox="0 0 43 40" fill="none" aria-hidden="true">
          <path d="M42 2C26-2 6 4 2 20c-2 8 3 11 9 11-4-2-5-6-3-11C13 9 27 3 42 2z" fill="#4d94cf" />
          <path d="M32 11c-9-2-19 3-20 10-1 6 8 8 14 2 3-3 1-6-3-5 2 1 2 3 0 4-3 3-8 2-7-2 1-5 9-9 16-9z" fill="#4d94cf" />
          <path d="M37 6c-5 3-7 6-6 9 1 4 2 7-3 11-5 5-13 8-21 8 15 3 30-3 33-12 2-6-6-8-3-16z" fill="#5dbb7c" />
          <path d="M6 36c9 1 19-1 25-7 3-2 6-4 8-6-4 12-20 18-33 13z" fill="#c3d35a" />
        </svg>
        <div>
          <MarkName>极光下载站</MarkName>
          <MarkUrl>www.xz7.com</MarkUrl>
        </div>
      </Watermark>

      <Notes width="1240" height="460" viewBox="0 0 1240 460" aria-hidden="true">
        <defs>
          <filter id="shade" x="-20%" y="-20%" width="150%" height="150%">
            <feDropShadow dx="3" dy="3" stdDeviation="1.500" floodColor="#000" floodOpacity=".45" />
          </filter>
        </defs>
        <g filter="url(#shade)" fill="#f00808">
          <path d="M256 438.500l13-23 1.500 6.500L351.500 328.500l2.200 1.800L273.500 424.500l4-.5z" stroke="#b00" strokeWidth=".5" />
          <path d="M1143.500 88l-2 27-4.500-3-36 77-2.500-1.200 34.500-78-5.500-1.800z" stroke="#b00" strokeWidth=".5" />
        </g>
        <path d="M1189.500 81v17l4-3.500 3 6.500 3-1.500-3-6h5.500z" fill="#fff" stroke="#222" />
      </Notes>
    </Window>
  );
}
